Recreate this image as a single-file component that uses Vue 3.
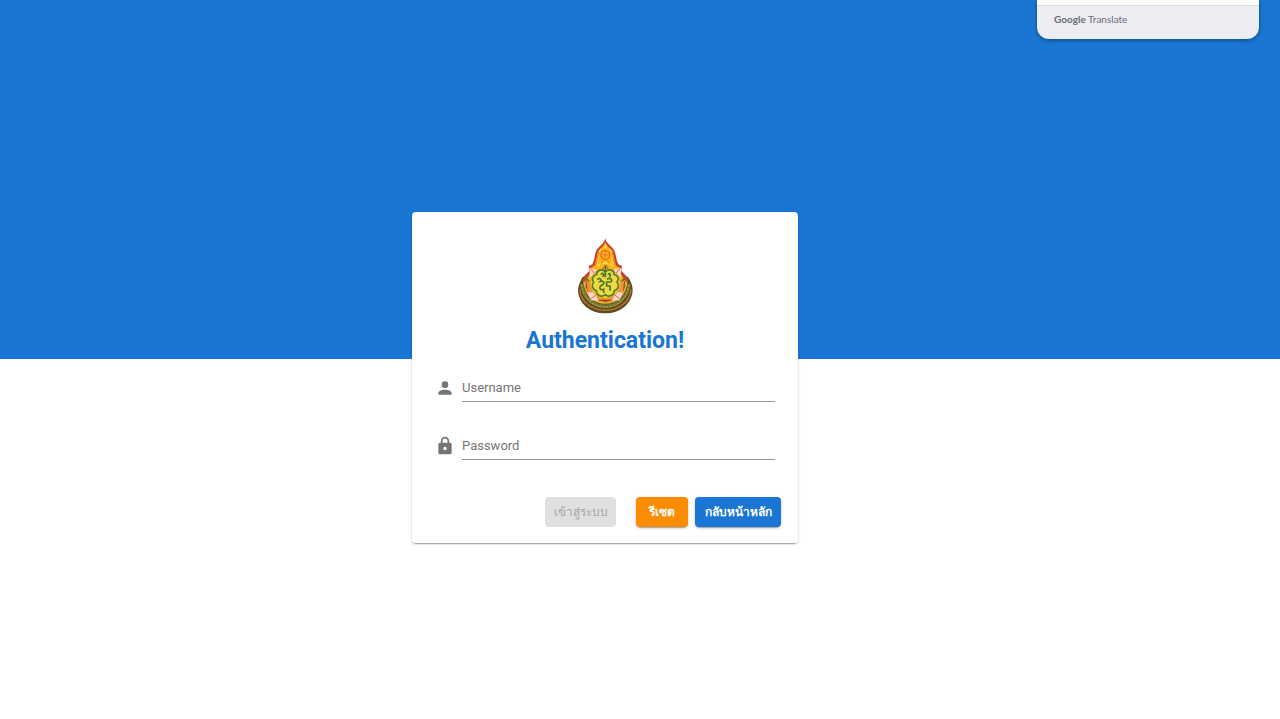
<script setup>
import { ref, computed } from "vue"

const username = ref("")
const password = ref("")

const valid = computed(() => username.value !== "" && password.value !== "")

function reset(){
  username.value = ""
  password.value = ""
}
</script>


<template>

<div class="page">

<aside class="translate">
<div class="translate-body"></div>
<div class="translate-footer"><b>Google</b> Translate</div>
</aside>

<main class="content">

<form class="card" @submit.prevent>

<!-- emblem -->
<svg class="logo" viewBox="36 26 168 228" aria-hidden="true">
<path d="M39 182C40 167 46 155 53 143L70 138L120 110L172 138L189 143C197 155 203 167 203 182C202 224 165 252 121 252C76 252 40 224 39 182Z" fill="#5f4a24"/>
<path d="M121 27C123 39 131 45 139 52C151 62 152 76 155 92L160 105L171 110L169 124L184 140L190 154L121 180L52 154L58 140L73 124L71 110L82 105L87 92C90 76 91 62 103 52C111 45 119 39 121 27Z" fill="#c8442b"/>
<path d="M121 39C124 49 132 53 137 60C147 70 146 86 150 98L154 110L164 115C163 131 173 142 180 154L121 190L62 154C69 142 79 131 78 115L88 110L92 98C96 86 95 70 105 60C110 53 118 49 121 39Z" fill="#f8b51c"/>
<path d="M44 180C47 217 78 242 121 243C164 242 195 217 198 180" fill="none" stroke="#b9782b" stroke-width="4"/>
<path d="M50 164C54 205 84 230 121 231C158 230 188 205 192 164" fill="none" stroke="#6f7a30" stroke-width="10"/>
<path d="M50 166C54 208 84 233 121 234C158 233 188 208 192 166" fill="none" stroke="#d2a238" stroke-width="3" stroke-dasharray="7 4"/>
<path d="M58 156C62 196 86 219 121 220C156 219 180 196 184 156" fill="none" stroke="#e0b12a" stroke-width="7"/>
<path d="M63 168C70 195 88 212 121 215C154 212 172 195 179 168" fill="none" stroke="#b53a25" stroke-width="4"/>
<path d="M64 152H178L173 192L149 211H93L69 192Z" fill="#eb963a"/>
<path d="M73 116L97 121L75 146ZM169 116L145 121L167 146ZM67 190L86 188L101 214L78 213ZM174 190L155 188L140 214L164 213Z" fill="#fbd8cb"/>
<path d="M78 119L91 134M164 119L151 134M76 210L92 197M166 210L150 197" stroke="#e55b43" stroke-width="3"/>
<path d="M108 59C93 73 102 87 96 104M134 59C149 73 140 87 146 104M98 110C109 98 133 98 144 110M121 45V57" fill="none" stroke="#ffe23c" stroke-width="4"/>
<path d="M102 68C95 82 99 92 90 108M140 68C147 82 143 92 152 108" fill="none" stroke="#ee6b22" stroke-width="3"/>
<circle cx="121" cy="77" r="13" fill="#f9b022" stroke="#e96120" stroke-width="4"/>
<path d="M121 70V84M114 77H128M115 94L107 106M127 94L135 106" stroke="#e87925" stroke-width="3"/>
<circle cx="121" cy="162" r="45" fill="#f5d32d" stroke="#e9a11c" stroke-width="3"/>
<path d="M121 127C107 116 95 125 95 135C82 138 79 151 86 158C78 168 83 182 94 184C94 199 111 205 121 196C132 205 148 198 148 184C161 180 163 167 156 158C163 149 159 137 147 135C148 122 132 117 121 127Z" fill="#e9da45" stroke="#5c7d2b" stroke-width="5"/>
<path d="M121 108V144M108 136C114 126 120 139 112 142M129 136C135 128 139 137 133 143M97 151C104 143 111 151 106 156C118 154 121 162 110 168C99 174 106 184 116 180V191M126 150C136 143 145 151 137 158H125V170H135V184" fill="none" stroke="#4d762a" stroke-width="5"/>
<path d="M113 119C119 106 125 106 129 119" fill="none" stroke="#b9472d" stroke-width="3"/>
<path d="M60 146L72 155M182 146L170 155" stroke="#59752c" stroke-width="5"/>
</svg>

<h1>Authentication!</h1>

<div class="field">
<svg class="icon" viewBox="0 0 24 24" aria-hidden="true"><path d="M12 4a4 4 0 1 1 0 8a4 4 0 0 1 0-8m0 10c4.420 0 8 1.790 8 4v2H4v-2c0-2.210 3.580-4 8-4Z"/></svg>
<div class="control">
<label v-show="!username" for="username">Username</label>
<input id="username" v-model="username" type="text">
</div>
</div>

<div class="field">
<svg class="icon" viewBox="0 0 24 24" aria-hidden="true"><path d="M12 17a2 2 0 0 0 0-4a2 2 0 0 0 0 4m6-9a2 2 0 0 1 2 2v10a2 2 0 0 1-2 2H6a2 2 0 0 1-2-2V10a2 2 0 0 1 2-2h1V6a5 5 0 0 1 10 0v2h1m-6-5a3 3 0 0 0-3 3v2h6V6a3 3 0 0 0-3-3Z"/></svg>
<div class="control">
<label v-show="!password" for="password">Password</label>
<input id="password" v-model="password" type="password">
</div>
</div>

<div class="actions">
<button class="login" type="submit" :disabled="!valid">เข้าสู่ระบบ</button>
<button class="reset" type="button" @click="reset">รีเซต</button>
<button class="home" type="button">กลับหน้าหลัก</button>
</div>

</form>

</main>

</div>

</template>


<style>
body{
background:white;
}
</style>

<style scoped>

.page{
position:relative;
min-height:100vh;
background:linear-gradient(#1976d2 50%, white 50%);
font-family:Roboto, "Noto Sans", sans-serif;
}

.translate{
position:absolute;
top:0;
right:21px;
width:222px;
border-radius:0 0 12px 12px;
overflow:hidden;
background:#ebedf3;
box-shadow:0 1px 4px rgba(0,0,0,0.4);
}

.translate-body{
height:5px;
background:white;
border-bottom:1px solid #dadce0;
}

.translate-footer{
padding:5px 17px 12px;
font-family:Lato, sans-serif;
font-size:10px;
line-height:16px;
color:#6b6e73;
}

.translate-footer b{
font-weight:700;
}

.content{
box-sizing:border-box;
min-height:100vh;
padding:36px 70px 0 0;
display:flex;
align-items:center;
justify-content:center;
}

.card{
box-sizing:border-box;
width:100%;
max-width:386px;
padding:26px 16px 16px;
border-radius:4px;
background:white;
box-shadow:0 3px 1px -2px rgba(0,0,0,0.2), 0 1px 2px rgba(0,0,0,0.14), 0 1px 3px rgba(0,0,0,0.12);
}

.logo{
display:block;
width:56px;
height:76px;
margin:0 auto;
}

h1{
margin:11px 0 17px;
font-size:23px;
line-height:32px;
font-weight:700;
text-align:center;
color:#1976d2;
}

.field{
display:flex;
align-items:center;
gap:7px;
padding:0 7px;
margin-bottom:30px;
}

.icon{
width:20px;
height:20px;
fill:#757575;
}

.control{
position:relative;
flex:1;
}

.control label{
position:absolute;
left:0;
top:4px;
font-size:13px;
line-height:20px;
color:#757575;
pointer-events:none;
}

.control input{
display:block;
box-sizing:border-box;
width:100%;
height:28px;
padding:0;
border:0;
border-bottom:1px solid #949494;
outline:0;
background:transparent;
font:inherit;
}

.actions{
display:flex;
justify-content:flex-end;
gap:7px;
margin-top:37px;
padding-right:1px;
}

button{
height:30px;
padding:0 7px 2px;
border:0;
border-radius:4px;
font-family:inherit;
font-size:12px;
font-weight:700;
color:white;
box-shadow:0 3px 1px -2px rgba(0,0,0,0.2), 0 1px 2px rgba(0,0,0,0.14), 0 1px 4px rgba(0,0,0,0.12);
}

.login{
min-width:71px;
margin-right:13px;
}

.login:disabled{
background:#e0e0e0;
color:#a6a6a6;
font-weight:500;
box-shadow:none;
}

.reset{
min-width:52px;
background:#fb8c00;
}

.home{
min-width:86px;
background:#1976d2;
}

</style>
